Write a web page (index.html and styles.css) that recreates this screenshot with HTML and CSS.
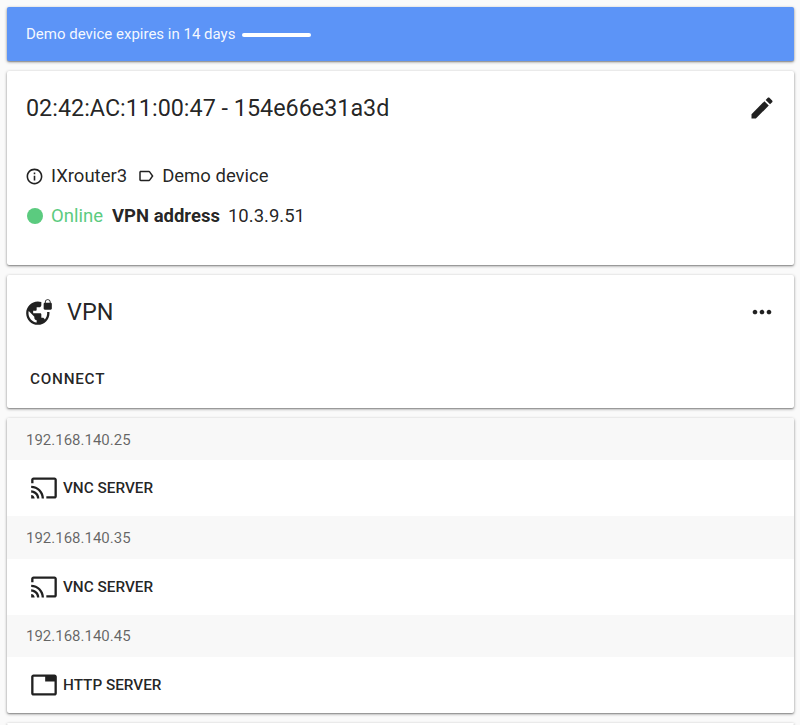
FILE: index.html
```html
<!DOCTYPE html>
<html lang="en">
<head>
<meta charset="utf-8">
<title>Device</title>
<link rel="stylesheet" href="styles.css">
</head>
<body>
<section class="card banner">
  <span>Demo device expires in 14 days</span>
  <span class="progress"></span>
</section>
<section class="card device">
  <header class="device-head">
    <h1 class="title">02:42:AC:11:00:47 - 154e66e31a3d</h1>
    <svg class="icon-edit" viewBox="0 0 24 24"><path d="M3 17.25V21h3.75L17.81 9.94l-3.75-3.75L3 17.25zM20.71 7.04c.39-.39.39-1.02 0-1.41l-2.34-2.34c-.39-.39-1.02-.39-1.41 0l-1.83 1.83 3.75 3.75 1.83-1.83z"/></svg>
  </header>
  <div class="meta meta-info">
    <svg class="icon-info" viewBox="0 0 24 24"><path d="M11 7h2v2h-2zm0 4h2v6h-2zm1-9C6.48 2 2 6.48 2 12s4.48 10 10 10 10-4.48 10-10S17.52 2 12 2zm0 18c-4.41 0-8-3.59-8-8s3.59-8 8-8 8 3.59 8 8-3.59 8-8 8z"/></svg>
    <span class="meta-text">IXrouter3</span>
    <svg class="icon-label" viewBox="0 0 24 24"><path d="M17.63 5.84C17.27 5.33 16.67 5 16 5L5 5.01C3.9 5.01 3 5.9 3 7v10c0 1.1.9 1.99 2 1.99L16 19c.67 0 1.27-.33 1.63-.84L22 12l-4.37-6.16zM16 17H5V7h11l3.55 5L16 17z"/></svg>
    <span class="meta-text">Demo device</span>
  </div>
  <div class="meta meta-status">
    <span class="dot"></span>
    <span class="online">Online</span>
    <strong class="vpn-label">VPN address</strong>
    <span>10.3.9.51</span>
  </div>
</section>
<section class="card vpn">
  <header class="vpn-head">
    <svg class="icon-vpn" viewBox="0 0 24 24"><path d="M22 4v-.5C22 2.12 20.88 1 19.5 1S17 2.12 17 3.5V4c-.55 0-1 .45-1 1v4c0 .55.45 1 1 1h5c.55 0 1-.45 1-1V5c0-.55-.45-1-1-1zm-.8 0h-3.4v-.5c0-.94.76-1.7 1.7-1.7s1.7.76 1.7 1.7V4zm-2.28 8c.04.33.08.66.08 1 0 2.08-.8 3.97-2.1 5.39-.26-.81-1-1.39-1.9-1.39h-1v-3c0-.55-.45-1-1-1H7v-2h2c.55 0 1-.45 1-1V8h2c1.1 0 2-.9 2-2V3.46c-.95-.3-1.95-.46-3-.46C5.48 3 1 7.48 1 13s4.48 10 10 10 10-4.48 10-10c0-.34-.02-.67-.05-1h-2.03zM10 20.93c-3.95-.49-7-3.85-7-7.93 0-.62.08-1.21.21-1.79L8 16v1c0 1.1.9 2 2 2v1.93z"/></svg>
    <h2 class="vpn-title">VPN</h2>
    <svg class="icon-more" viewBox="0 0 24 24"><path d="M6 10c-1.1 0-2 .9-2 2s.9 2 2 2 2-.9 2-2-.9-2-2-2zm12 0c-1.1 0-2 .9-2 2s.9 2 2 2 2-.9 2-2-.9-2-2-2zm-6 0c-1.1 0-2 .9-2 2s.9 2 2 2 2-.9 2-2-.9-2-2-2z"/></svg>
  </header>
  <div class="connect">CONNECT</div>
</section>
<section class="card hosts">
  <div class="host-addr">192.168.140.25</div>
  <div class="service">
    <svg class="icon-service" viewBox="0 0 24 24"><path d="M21 3H3c-1.1 0-2 .9-2 2v3h2V5h18v14h-7v2h7c1.1 0 2-.9 2-2V5c0-1.1-.9-2-2-2zM1 18v3h3c0-1.66-1.34-3-3-3zm0-4v2c2.76 0 5 2.24 5 5h2c0-3.87-3.13-7-7-7zm0-4v2c4.97 0 9 4.03 9 9h2c0-6.08-4.93-11-11-11z"/></svg>
    <span>VNC SERVER</span>
  </div>
  <div class="host-addr">192.168.140.35</div>
  <div class="service">
    <svg class="icon-service" viewBox="0 0 24 24"><path d="M21 3H3c-1.1 0-2 .9-2 2v3h2V5h18v14h-7v2h7c1.1 0 2-.9 2-2V5c0-1.1-.9-2-2-2zM1 18v3h3c0-1.66-1.34-3-3-3zm0-4v2c2.76 0 5 2.24 5 5h2c0-3.87-3.13-7-7-7zm0-4v2c4.97 0 9 4.03 9 9h2c0-6.08-4.93-11-11-11z"/></svg>
    <span>VNC SERVER</span>
  </div>
  <div class="host-addr">192.168.140.45</div>
  <div class="service">
    <svg class="icon-service" viewBox="0 0 24 24"><path d="M21 3H3c-1.1 0-2 .9-2 2v14c0 1.1.9 2 2 2h18c1.1 0 2-.9 2-2V5c0-1.1-.9-2-2-2zm0 16H3V5h10v4h8v10z"/></svg>
    <span>HTTP SERVER</span>
  </div>
</section>
<section class="card tail"></section>
</body>
</html>
```
FILE: styles.css
```css
html, body { height: 725px; overflow: hidden; }
body {
  box-sizing: border-box;
  margin: 0;
  padding: 7px 6px 0 7px;
  background: #fafafa;
  font-family: Roboto, "Liberation Sans", sans-serif;
  color: rgba(0, 0, 0, 0.87);
  display: flex;
  flex-direction: column;
  gap: 10px;
}
svg { fill: rgba(0, 0, 0, 0.87); flex: none; display: block; }
.card {
  flex: none;
  background: #fff;
  border-radius: 2px;
  box-shadow: 0 1px 3px rgba(0, 0, 0, 0.45), 0 1px 1px rgba(0, 0, 0, 0.14);
}
.banner {
  height: 54px;
  padding: 0 19px;
  background: #5c94f7;
  color: rgba(255, 255, 255, 0.95);
  font-size: 15px;
  display: flex;
  align-items: center;
  gap: 7px;
}
.progress { width: 69px; height: 4px; margin-top: 2px; border-radius: 2px; background: #fff; }
.device { height: 194px; padding: 0 19px; }
.device-head {
  height: 74px;
  display: flex;
  align-items: center;
  justify-content: space-between;
}
.title { margin: 0; font-size: 23.35px; font-weight: 400; }
.icon-edit { width: 28px; height: 28px; margin-right: -1px; }
.meta { display: flex; align-items: center; font-size: 18.5px; }
.meta-info { margin-top: 19px; height: 24px; }
.icon-info { width: 19px; height: 19px; margin: 0 7px 0 -1px; }
.icon-label { width: 18px; height: 18px; margin: 0 7px 0 10px; }
.meta-status { margin-top: 16px; height: 24px; }
.dot { width: 16px; height: 16px; margin: 0 8px 0 1px; border-radius: 50%; background: #5bcb7f; }
.online { color: #5bcb7f; }
.vpn-label { margin: 0 8px 0 9px; font-weight: 700; }
.vpn { height: 133px; padding: 0 19px; }
.vpn-head { height: 74px; display: flex; align-items: center; }
.icon-vpn { width: 28px; height: 28px; margin-left: -1px; }
.vpn-title { margin: 0 0 0 14px; font-size: 23.4px; font-weight: 400; flex: 1; }
.icon-more { width: 28px; height: 28px; margin-right: -1px; }
.connect { margin: 21px 0 0 4px; font-size: 15.3px; font-weight: 500; letter-spacing: 0.75px; }
.hosts { height: 295px; overflow: hidden; }
.host-addr {
  box-sizing: border-box;
  height: 42.33px;
  padding: 1px 19px 0;
  background: #f8f8f8;
  color: rgba(0, 0, 0, 0.6);
  font-size: 15px;
  display: flex;
  align-items: center;
}
.service {
  height: 56px;
  padding: 0 19px 0 23px;
  box-sizing: border-box;
  display: flex;
  align-items: center;
  gap: 5px;
  font-size: 15.3px;
  font-weight: 500;
}
.icon-service { width: 28px; height: 28px; }
.tail { height: 2px; }
```
